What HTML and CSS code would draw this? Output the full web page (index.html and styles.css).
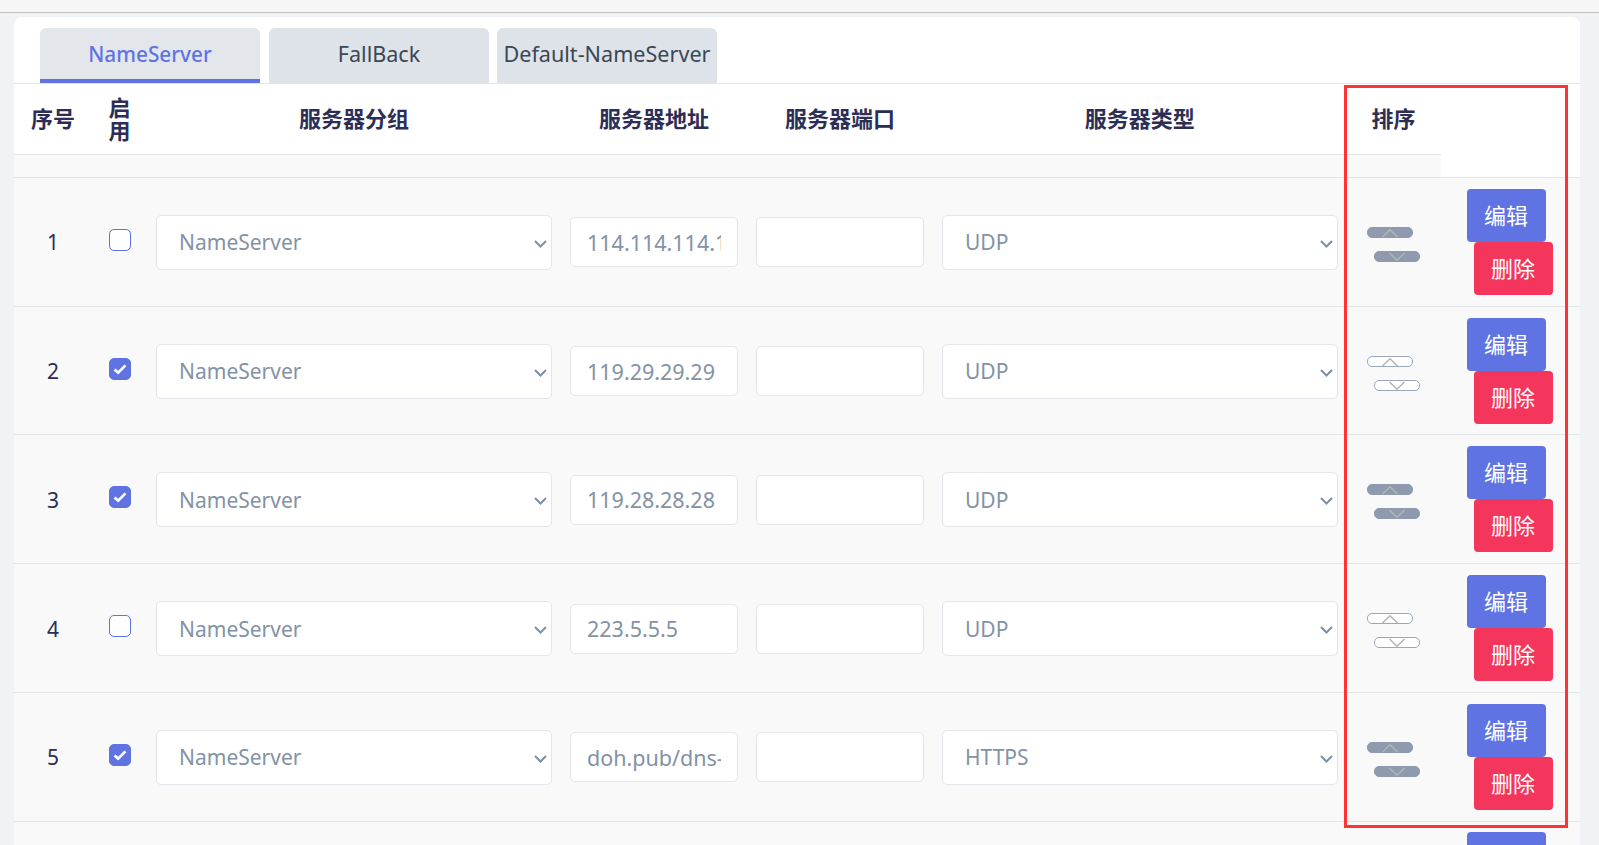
FILE: index.html
```html
<!DOCTYPE html>
<html lang="zh-CN">
<head>
<meta charset="utf-8">
<title>DNS</title>
<link rel="stylesheet" href="styles.css">
</head>
<body>
<header class="topbar"></header>
<main class="card">
  <nav class="tabs">
    <a class="tab tab-active">NameServer</a>
    <a class="tab">FallBack</a>
    <a class="tab tab-last">Default-NameServer</a>
  </nav>
  <table class="dns-table">
    <colgroup>
      <col class="c-index"><col class="c-on"><col class="c-group"><col class="c-addr"><col class="c-port"><col class="c-type"><col class="c-sort"><col class="c-act">
    </colgroup>
    <thead>
      <tr><th>序号</th><th class="th-on">启用</th><th>服务器分组</th><th>服务器地址</th><th>服务器端口</th><th>服务器类型</th><th>排序</th></tr>
    </thead>
    <tbody>
      <tr class="spacer"><td></td><td></td><td></td><td></td><td></td><td></td><td></td></tr>
      <tr class="row">
        <td>1</td><td><input class="check" type="checkbox"></td>
        <td><select class="field"><option>NameServer</option></select></td>
        <td><input class="field text" type="text" value="114.114.114.114"></td>
        <td><input class="field text" type="text"></td>
        <td><select class="field"><option>UDP</option></select></td>
        <td><div class="sort"><button class="arrow solid"><svg viewBox="0 0 16 8"><path d="M.5 8 8 .7 15.5 8"/></svg></button><button class="arrow solid down"><svg viewBox="0 0 16 8"><path d="M.5 0 8 7.3 15.5 0"/></svg></button></div></td>
        <td><div class="acts"><button class="btn edit">编辑</button><button class="btn del">删除</button></div></td>
      </tr>
      <tr class="row">
        <td>2</td><td><input class="check" type="checkbox" checked></td>
        <td><select class="field"><option>NameServer</option></select></td>
        <td><input class="field text" type="text" value="119.29.29.29"></td>
        <td><input class="field text" type="text"></td>
        <td><select class="field"><option>UDP</option></select></td>
        <td><div class="sort"><button class="arrow"><svg viewBox="0 0 16 8"><path d="M.5 8 8 .7 15.5 8"/></svg></button><button class="arrow down"><svg viewBox="0 0 16 8"><path d="M.5 0 8 7.3 15.5 0"/></svg></button></div></td>
        <td><div class="acts"><button class="btn edit">编辑</button><button class="btn del">删除</button></div></td>
      </tr>
      <tr class="row">
        <td>3</td><td><input class="check" type="checkbox" checked></td>
        <td><select class="field"><option>NameServer</option></select></td>
        <td><input class="field text" type="text" value="119.28.28.28"></td>
        <td><input class="field text" type="text"></td>
        <td><select class="field"><option>UDP</option></select></td>
        <td><div class="sort"><button class="arrow solid"><svg viewBox="0 0 16 8"><path d="M.5 8 8 .7 15.5 8"/></svg></button><button class="arrow solid down"><svg viewBox="0 0 16 8"><path d="M.5 0 8 7.3 15.5 0"/></svg></button></div></td>
        <td><div class="acts"><button class="btn edit">编辑</button><button class="btn del">删除</button></div></td>
      </tr>
      <tr class="row">
        <td>4</td><td><input class="check" type="checkbox"></td>
        <td><select class="field"><option>NameServer</option></select></td>
        <td><input class="field text" type="text" value="223.5.5.5"></td>
        <td><input class="field text" type="text"></td>
        <td><select class="field"><option>UDP</option></select></td>
        <td><div class="sort"><button class="arrow"><svg viewBox="0 0 16 8"><path d="M.5 8 8 .7 15.5 8"/></svg></button><button class="arrow down"><svg viewBox="0 0 16 8"><path d="M.5 0 8 7.3 15.5 0"/></svg></button></div></td>
        <td><div class="acts"><button class="btn edit">编辑</button><button class="btn del">删除</button></div></td>
      </tr>
      <tr class="row">
        <td>5</td><td><input class="check" type="checkbox" checked></td>
        <td><select class="field"><option>NameServer</option></select></td>
        <td><input class="field text" type="text" value="doh.pub/dns-query"></td>
        <td><input class="field text" type="text"></td>
        <td><select class="field"><option>HTTPS</option></select></td>
        <td><div class="sort"><button class="arrow solid"><svg viewBox="0 0 16 8"><path d="M.5 8 8 .7 15.5 8"/></svg></button><button class="arrow solid down"><svg viewBox="0 0 16 8"><path d="M.5 0 8 7.3 15.5 0"/></svg></button></div></td>
        <td><div class="acts"><button class="btn edit">编辑</button><button class="btn del">删除</button></div></td>
      </tr>
      <tr class="row">
        <td></td><td></td><td></td><td></td><td></td><td></td><td></td>
        <td class="top-cell"><div class="acts"><button class="btn edit" aria-label="编辑"></button></div></td>
      </tr>
    </tbody>
  </table>
</main>
<div class="highlight"></div>
</body>
</html>
```

FILE: styles.css
```css
html, body {
  margin: 0;
  padding: 0;
  height: 845px;
  overflow: hidden;
}
body {
  position: relative;
  background: #f0f2f6;
  font-family: "Noto Sans", "Noto Sans CJK SC", sans-serif;
  font-size: 21px;
  color: #2c2e56;
}
.topbar {
  height: 12px;
  background: #f6f6f6;
  border-bottom: 1px solid #bfbfbf;
}
.card {
  margin: 4px 19px 0 14px;
  padding-top: 11px;
  background: #fff;
  border-radius: 8px 8px 0 0;
}
.tabs {
  display: flex;
  height: 55px;
  padding-left: 26px;
  border-bottom: 1px solid #e3e6e9;
}
.tab {
  box-sizing: border-box;
  width: 220px;
  margin-right: 9px;
  background: #dde3e9;
  border-radius: 6px 6px 0 0;
  text-align: center;
  font-size: 21.6px;
  line-height: 52px;
  color: #3b4754;
}
.tab-last {
  margin-left: -1px;
}
.tab-active {
  background: #e3e7ec;
  border-bottom: 4px solid #5f73e3;
  font-size: 20.8px;
  font-weight: 500;
  color: #5f73e3;
}
.dns-table {
  width: 1566px;
  table-layout: fixed;
  border-collapse: collapse;
}
.c-index { width: 78px; }
.c-on { width: 55px; }
.c-group { width: 414px; }
.c-addr { width: 186px; }
.c-port { width: 186px; }
.c-type { width: 413.5px; }
.c-sort { width: 94px; }
.c-act { width: 139.5px; }
th {
  height: 70px;
  padding: 0 13px 2px;
  font-family: "Noto Sans CJK SC", sans-serif;
  font-weight: 700;
  font-size: 22px;
  line-height: 23px;
  text-align: center;
  border-bottom: 1px solid #e3e6e9;
  box-sizing: border-box;
}
.th-on {
  padding: 0 16px 2px;
}
.spacer td {
  height: 22.4px;
  padding: 0;
  background: #f9f9f9;
}
.row td {
  height: 128.8px;
  padding: 1px 9px 0;
  box-sizing: border-box;
  background: #f9f9f9;
  border-top: 1px solid #e3e6e9;
  text-align: center;
  vertical-align: middle;
}
.row .top-cell {
  padding-top: 11px;
  vertical-align: top;
}
.check {
  appearance: none;
  display: block;
  box-sizing: border-box;
  width: 22px;
  height: 22px;
  margin: 0 auto 5px;
  background: #fff;
  border: 1px solid #5f73e3;
  border-radius: 5px;
}
.check:checked {
  background: #5f73e3 url("data:image/svg+xml,%3Csvg xmlns='http://www.w3.org/2000/svg' viewBox='0 0 22 22'%3E%3Cpath d='M5 11.5 9 15 17 7' fill='none' stroke='%23fff' stroke-width='3'/%3E%3C/svg%3E") center/100% no-repeat;
}
.field {
  display: block;
  box-sizing: border-box;
  width: 100%;
  margin: 0;
  background-color: #fff;
  border: 1px solid #e3e6ea;
  border-radius: 5px;
  font-family: inherit;
  font-size: 21.5px;
  color: #8392a5;
}
select.field {
  appearance: none;
  height: 55px;
  padding: 0 22px;
  font-size: 21px;
  background-image: url("data:image/svg+xml,%3Csvg xmlns='http://www.w3.org/2000/svg' viewBox='0 0 13 8'%3E%3Cpath d='M1 1 6.5 6.5 12 1' fill='none' stroke='%237f8fa4' stroke-width='2'/%3E%3C/svg%3E");
  background-repeat: no-repeat;
  background-size: 13px 8px;
  background-position: right 4px top 24px;
}
.text {
  height: 50px;
  padding: 0 16px;
  outline: none;
}
.sort {
  display: flex;
  flex-direction: column;
  align-items: flex-start;
  gap: 13px;
  margin: 4px 0 0 11px;
}
.arrow {
  display: block;
  box-sizing: border-box;
  width: 46px;
  height: 11px;
  padding: 1px 0 0;
  background: #fff;
  border: 1px solid #9aa7ba;
  border-radius: 5px;
  line-height: 0;
}
.arrow svg {
  display: block;
  width: 16px;
  height: 8px;
  margin: 0 auto;
  overflow: visible;
  fill: none;
  stroke: #b4b4b4;
  stroke-width: 1.5;
}
.solid {
  background: #8e9bae;
  border-color: #8e9bae;
}
.down {
  margin-left: 7px;
}
.acts {
  display: flex;
  flex-direction: column;
  align-items: flex-start;
  margin: -1px 0 0 17px;
}
.btn {
  display: block;
  box-sizing: border-box;
  width: 79px;
  height: 53px;
  padding: 0 0 3px;
  border: 0;
  border-radius: 4px;
  font-family: inherit;
  font-size: 22px;
  color: #fff;
}
.edit {
  background: #5f73e3;
}
.del {
  margin-left: 7px;
  background: #f5365c;
}
.highlight {
  position: absolute;
  left: 1344px;
  top: 85px;
  box-sizing: border-box;
  width: 224px;
  height: 743px;
  border: 3px solid #ff3333;
}
```
